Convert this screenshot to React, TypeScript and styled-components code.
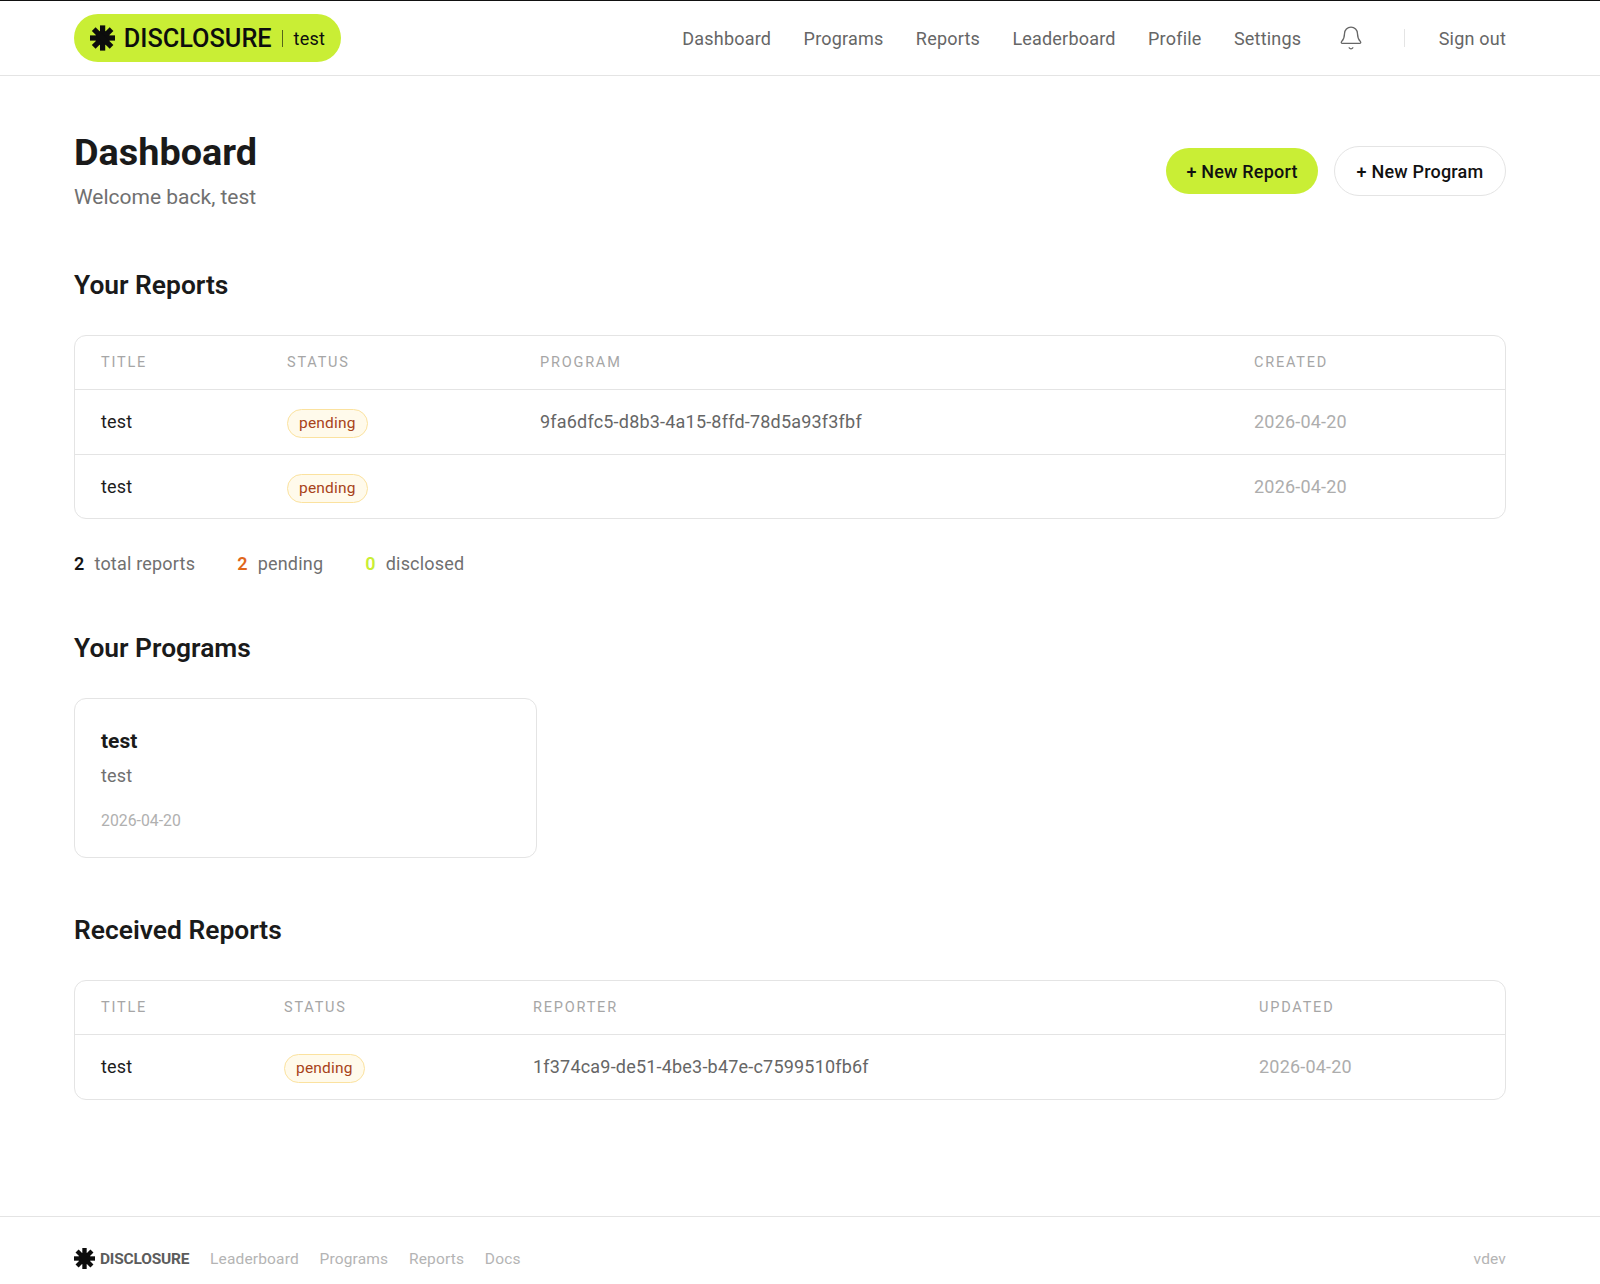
import React from "react";
import styled, { createGlobalStyle } from "styled-components";
import { Bell } from "lucide-react";

const lime = "#c9ee35";
const line = "#e4e4e4";

const GlobalStyle = createGlobalStyle`
  html, body {
    margin: 0;
    padding: 0;
    background: #ffffff;
    font-family: Roboto, "Liberation Sans", sans-serif;
    color: #141414;
  }
`;

const Page = styled.div`
  height: 1284px;
  display: flex;
  flex-direction: column;
  overflow: hidden;
`;

const Header = styled.header`
  height: 74px;
  flex: none;
  border-top: 1px solid #111111;
  border-bottom: 1px solid ${line};
  padding: 0 94px 0 74px;
  display: flex;
  align-items: center;
  justify-content: space-between;
`;

const LogoPill = styled.div`
  height: 48px;
  width: 267px;
  box-sizing: border-box;
  padding: 0 16px;
  border-radius: 24px;
  background: ${lime};
  display: flex;
  align-items: center;
  color: #0d0d0d;
`;

const LogoWord = styled.span`
  font-size: 25.3px;
  font-weight: 500;
  margin-left: 8.5px;
  color: #0d0d0d;
`;

const PillDivider = styled.span`
  width: 1px;
  height: 17px;
  background: #55651a;
  margin: 0 11px 0 10px;
`;

const PillUser = styled.span`
  font-size: 18px;
  font-weight: 400;
  letter-spacing: 0.2px;
`;

const Nav = styled.nav`
  display: flex;
  align-items: center;
  gap: 32.4px;
`;

const NavLink = styled.a`
  font-size: 18px;
  color: #666666;
  letter-spacing: 0.2px;
`;

const NavDivider = styled.span`
  width: 1px;
  height: 18px;
  background: ${line};
  margin: 0 1.6px 0 7.2px;
`;

const BellButton = styled.span`
  display: flex;
  margin-left: 4.5px;
  color: #666666;
`;

const Main = styled.main`
  flex: 1;
  padding: 56px 94px 0 74px;
`;

const TitleRow = styled.div`
  display: flex;
  align-items: center;
  justify-content: space-between;
`;

const PageTitle = styled.h1`
  margin: 0;
  font-size: 37.8px;
  line-height: 40px;
  font-weight: 700;
  color: #1a1a1a;
`;

const Welcome = styled.p`
  margin: 12px 0 0;
  font-size: 21px;
  line-height: 26px;
  color: #707070;
`;

const Actions = styled.div`
  display: flex;
  align-items: center;
  gap: 16px;
`;

const ActionButton = styled.button<{ $primary?: boolean }>`
  height: ${(p) => (p.$primary ? 46 : 50)}px;
  width: ${(p) => (p.$primary ? 152 : 172)}px;
  box-sizing: border-box;
  border-radius: 25px;
  border: ${(p) => (p.$primary ? "none" : `1px solid ${line}`)};
  background: ${(p) => (p.$primary ? lime : "#ffffff")};
  font-family: inherit;
  font-size: 18px;
  font-weight: 500;
  letter-spacing: 0.2px;
  color: #111111;
  padding: 0;
`;

const SectionTitle = styled.h2<{ $top: number }>`
  margin: ${(p) => p.$top}px 0 34px;
  font-size: 26.4px;
  line-height: 32px;
  font-weight: 600;
  color: #1a1a1a;
`;

const TableCard = styled.div`
  border: 1px solid ${line};
  border-radius: 12px;
  overflow: hidden;
`;

const Table = styled.table`
  width: 100%;
  border-collapse: collapse;
  table-layout: fixed;
`;

const Col = styled.col<{ $w: number }>`
  width: ${(p) => p.$w}px;
`;

const Th = styled.th`
  height: 53px;
  padding: 0 0 0 26px;
  text-align: left;
  font-size: 14.5px;
  font-weight: 400;
  letter-spacing: 1.8px;
  color: #a6a6a6;
  border-bottom: 1px solid ${line};
`;

const Td = styled.td<{ $tone?: "dark" | "mid" | "light" }>`
  height: 63.5px;
  padding: 0 0 0 26px;
  font-size: 18px;
  letter-spacing: 0.2px;
  color: ${(p) =>
    p.$tone === "dark" ? "#1c1c1c" : p.$tone === "light" ? "#adadad" : "#666666"};
`;

const Tr = styled.tr`
  & + & td {
    border-top: 1px solid ${line};
  }
`;

const Badge = styled.span`
  display: inline-block;
  box-sizing: border-box;
  height: 29px;
  line-height: 27px;
  margin-top: 4px;
  padding: 0 11px;
  border: 1px solid #fbe29f;
  border-radius: 15px;
  background: #fffaeb;
  font-size: 15.5px;
  font-weight: 400;
  letter-spacing: 0.2px;
  color: #a8431a;
  vertical-align: middle;
`;

const Stats = styled.div`
  display: flex;
  gap: 42px;
  margin-top: 33px;
`;

const Stat = styled.div`
  display: flex;
  gap: 10px;
  font-size: 18px;
  line-height: 24px;
  letter-spacing: 0.2px;
  color: #707070;
`;

const StatNum = styled.span<{ $color: string }>`
  font-weight: 600;
  color: ${(p) => p.$color};
`;

const ProgramCard = styled.div`
  width: 463px;
  height: 160px;
  box-sizing: border-box;
  border: 1px solid ${line};
  border-radius: 12px;
  padding: 29px 26px 0;
`;

const ProgramName = styled.div`
  font-size: 21px;
  line-height: 26px;
  font-weight: 700;
  color: #1a1a1a;
`;

const ProgramDesc = styled.div`
  margin-top: 10px;
  font-size: 18px;
  line-height: 24px;
  letter-spacing: 0.2px;
  color: #707070;
`;

const ProgramDate = styled.div`
  margin-top: 23px;
  font-size: 15.8px;
  line-height: 20px;
  color: #b0b0b0;
`;

const Footer = styled.footer`
  height: 68px;
  box-sizing: border-box;
  flex: none;
  border-top: 1px solid ${line};
  padding: 16px 94px 0 74px;
  display: flex;
  align-items: center;
  justify-content: space-between;
`;

const FooterLeft = styled.div`
  display: flex;
  align-items: center;
  gap: 20.8px;
`;

const FooterLogo = styled.div`
  display: flex;
  align-items: center;
  gap: 5px;
  font-size: 15.5px;
  font-weight: 700;
  letter-spacing: -0.2px;
  color: #5c5c5c;
`;

const FooterLink = styled.a`
  font-size: 15.5px;
  letter-spacing: 0.15px;
  color: #b4b4b4;
`;

// eight flat-ended spokes round a solid middle
const Burst = ({ size }: { size: number }) => (
  <svg width={size} height={size} viewBox="0 0 26 26" fill="#0d0d0d">
    <circle cx="13" cy="13" r="7.5" />
    {[0, 45, 90, 135].map((deg) => (
      <rect key={deg} x="10.3" y="0" width="5.4" height="26" transform={`rotate(${deg} 13 13)`} />
    ))}
  </svg>
);

const reports = [
  { title: "test", program: "9fa6dfc5-d8b3-4a15-8ffd-78d5a93f3fbf" },
  { title: "test", program: "" },
];

const App = () => {
  return (
    <Page>
      <GlobalStyle />
      <Header>
        <LogoPill>
          <Burst size={26} />
          <LogoWord>DISCLOSURE</LogoWord>
          <PillDivider />
          <PillUser>test</PillUser>
        </LogoPill>
        <Nav>
          {["Dashboard", "Programs", "Reports", "Leaderboard", "Profile", "Settings"].map((item) => (
            <NavLink key={item}>{item}</NavLink>
          ))}
          <BellButton>
            <Bell size={26} strokeWidth={1.2} />
          </BellButton>
          <NavDivider />
          <NavLink>Sign out</NavLink>
        </Nav>
      </Header>
      <Main>
        <TitleRow>
          <div>
            <PageTitle>Dashboard</PageTitle>
            <Welcome>Welcome back, test</Welcome>
          </div>
          <Actions>
            <ActionButton $primary>+ New Report</ActionButton>
            <ActionButton>+ New Program</ActionButton>
          </Actions>
        </TitleRow>

        <SectionTitle $top={59}>Your Reports</SectionTitle>
        <TableCard>
          <Table>
            <colgroup>
              <Col $w={186} />
              <Col $w={253} />
              <Col $w={714} />
              <Col $w={277} />
            </colgroup>
            <thead>
              <tr>
                <Th>TITLE</Th>
                <Th>STATUS</Th>
                <Th>PROGRAM</Th>
                <Th>CREATED</Th>
              </tr>
            </thead>
            <tbody>
              {reports.map((r, i) => (
                <Tr key={i}>
                  <Td $tone="dark">{r.title}</Td>
                  <Td>
                    <Badge>pending</Badge>
                  </Td>
                  <Td>{r.program}</Td>
                  <Td $tone="light">2026-04-20</Td>
                </Tr>
              ))}
            </tbody>
          </Table>
        </TableCard>
        <Stats>
          <Stat>
            <StatNum $color="#141414">2</StatNum> total reports
          </Stat>
          <Stat>
            <StatNum $color="#e0671c">2</StatNum> pending
          </Stat>
          <Stat>
            <StatNum $color={lime}>0</StatNum> disclosed
          </Stat>
        </Stats>

        <SectionTitle $top={56}>Your Programs</SectionTitle>
        <ProgramCard>
          <ProgramName>test</ProgramName>
          <ProgramDesc>test</ProgramDesc>
          <ProgramDate>2026-04-20</ProgramDate>
        </ProgramCard>

        <SectionTitle $top={56}>Received Reports</SectionTitle>
        <TableCard>
          <Table>
            <colgroup>
              <Col $w={183} />
              <Col $w={249} />
              <Col $w={726} />
              <Col $w={272} />
            </colgroup>
            <thead>
              <tr>
                <Th>TITLE</Th>
                <Th>STATUS</Th>
                <Th>REPORTER</Th>
                <Th>UPDATED</Th>
              </tr>
            </thead>
            <tbody>
              <Tr>
                <Td $tone="dark">test</Td>
                <Td>
                  <Badge>pending</Badge>
                </Td>
                <Td>1f374ca9-de51-4be3-b47e-c7599510fb6f</Td>
                <Td $tone="light">2026-04-20</Td>
              </Tr>
            </tbody>
          </Table>
        </TableCard>
      </Main>
      <Footer>
        <FooterLeft>
          <FooterLogo>
            <Burst size={21} />
            DISCLOSURE
          </FooterLogo>
          {["Leaderboard", "Programs", "Reports", "Docs"].map((item) => (
            <FooterLink key={item}>{item}</FooterLink>
          ))}
        </FooterLeft>
        <FooterLink>vdev</FooterLink>
      </Footer>
    </Page>
  );
};

export default App;
